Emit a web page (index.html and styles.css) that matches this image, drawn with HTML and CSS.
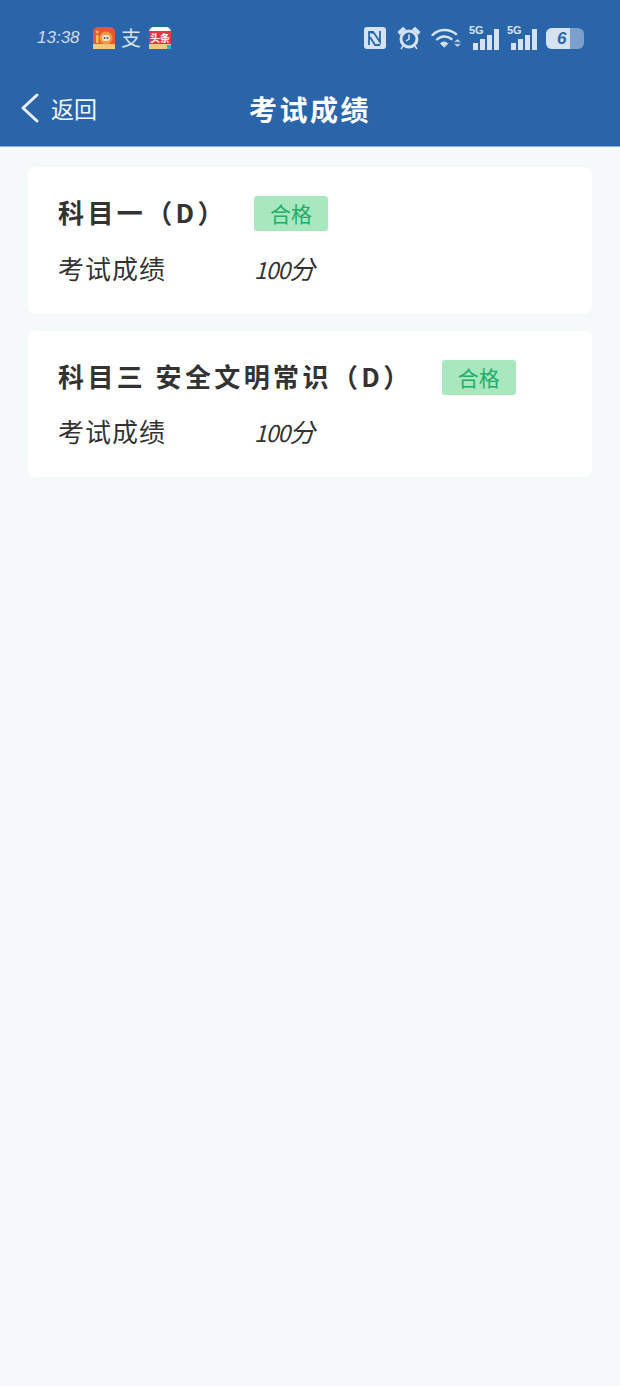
FILE: index.html
```html
<!DOCTYPE html>
<html lang="zh-CN">
  <head>
    <meta charset="UTF-8" />
    <meta name="viewport" content="width=device-width, initial-scale=1.0" />
    <title>考试成绩</title>
    <link rel="stylesheet" href="styles.css">
  </head>
  <body>
    <div class="header">
      <div class="status-bar">
        <div class="status-left">
          <span class="time">13:38</span>
          <svg class="app-icon" width="22" height="22" viewBox="0 0 22 22">
            <rect width="22" height="22" rx="5" fill="#e8553a" />
            <rect y="17" width="22" height="5" fill="#f5c77e" />
            <circle cx="13" cy="11" r="6.5" fill="#f29a3c" />
            <rect x="9" y="8" width="8" height="6" rx="3" fill="#f6e7d2" />
            <circle cx="11.5" cy="11" r="1" fill="#555" />
            <circle cx="14.5" cy="11" r="1" fill="#555" />
            <rect x="3" y="8" width="2.5" height="8" fill="#f9c04a" />
            <circle cx="4.2" cy="5" r="1.6" fill="#f9c04a" />
          </svg>
          <span class="app-glyph">支</span>
          <svg class="app-icon" width="22" height="22" viewBox="0 0 22 22">
            <rect width="22" height="22" rx="5" fill="#fff" />
            <rect y="4" width="22" height="13" fill="#e8353f" />
            <rect y="17" width="22" height="5" fill="#f5c77e" />
            <rect x="18" y="18" width="4" height="4" fill="#2bb5c9" />
            <text x="11" y="14.500" font-size="10" font-weight="bold" text-anchor="middle" fill="#fff">头条</text>
          </svg>
        </div>
        <div class="status-right">
          <svg class="nfc" width="22" height="22" viewBox="0 0 22 22">
            <rect width="22" height="22" rx="3" fill="#d5e2f2" />
            <path d="M5 18V5l5 1 6 9V4M5 5h5M16 18h-5l-5-8" fill="none" stroke="#2b65a9" stroke-width="1.800" />
          </svg>
          <svg class="alarm" width="24" height="24" viewBox="0 0 24 24">
            <circle cx="12" cy="13" r="8" fill="none" stroke="#d5e2f2" stroke-width="3" />
            <path d="M12 8.500V13l-3 2" fill="none" stroke="#d5e2f2" stroke-width="1.500" />
            <path d="M1.500 6 6 1.800 8 3.500 3 8zM22.500 6 18 1.800 16 3.500 21 8zM6 20l-2 3M18 20l2 3" fill="#d5e2f2" stroke="#d5e2f2" stroke-width="1.500" />
          </svg>
          <svg width="30" height="22" viewBox="0 0 30 22" fill="none" stroke="#d5e2f2" stroke-width="2.400" stroke-linecap="round">
            <path d="M1.500 8C8 1.500 18 1.500 25 7" />
            <path d="M6 12.500c4-4 10-4 14.500-.5" />
            <path d="M13 20l-3.500-3.500c2-2 5-2 7 0z" fill="#d5e2f2" stroke-width="1" />
            <path d="M24 14.500l2.500-2 2.500 2zM24 17.500l2.500 2 2.500-2z" fill="#d5e2f2" stroke-width="0.500" />
          </svg>
          <div class="signal">
            <span class="net">5G</span>
            <i class="b1"></i><i class="b2"></i><i class="b3"></i><i class="b4"></i>
          </div>
          <div class="signal">
            <span class="net">5G</span>
            <i class="b1"></i><i class="b2"></i><i class="b3"></i><i class="b4"></i>
          </div>
          <div class="battery"><div class="battery-level">6</div></div>
        </div>
      </div>
      <div class="nav-bar">
        <div class="back">
          <svg width="20" height="32" viewBox="0 0 20 32" fill="none" stroke="#e8eff8" stroke-width="3" stroke-linecap="round" stroke-linejoin="round">
            <path d="M17 3 3 16l14 13" />
          </svg>
          <span>返回</span>
        </div>
        <div class="nav-title">考试成绩</div>
      </div>
    </div>

    <div class="list">
      <div class="card">
        <div class="card-top">
          <span class="subject subject-short">科目一（D）</span>
          <span class="tag">合格</span>
        </div>
        <div class="score-row">
          <span class="score-label">考试成绩</span>
          <span class="score-value"><span class="score-num">100</span>分</span>
        </div>
      </div>
      <div class="card">
        <div class="card-top">
          <span class="subject">科目三 安全文明常识（D）</span>
          <span class="tag">合格</span>
        </div>
        <div class="score-row">
          <span class="score-label">考试成绩</span>
          <span class="score-value"><span class="score-num">100</span>分</span>
        </div>
      </div>
    </div>
  </body>
</html>
```

FILE: styles.css
```css
html,
body {
  height: 100%;
}
body {
  margin: 0;
  background: #f5f9fa;
  font-family: "Noto Sans CJK SC", "Liberation Sans", sans-serif;
  color: #333;
}
.header {
  height: 147px;
  background: #2b65a9;
  border-bottom: 1px solid #8fb0d6;
  box-sizing: border-box;
}
.status-bar {
  height: 72px;
  padding: 4px 36px 0 37px;
  box-sizing: border-box;
  display: flex;
  justify-content: space-between;
  align-items: center;
}
.status-left,
.status-right {
  display: flex;
  align-items: center;
}
.status-left {
  gap: 6px;
}
.status-right {
  gap: 8px;
}
.time {
  width: 50px;
  font-family: "Liberation Sans", sans-serif;
  font-size: 17px;
  font-style: italic;
  color: #cfdcee;
}
.app-glyph {
  width: 22px;
  font-size: 20px;
  line-height: 22px;
  color: #d5e2f2;
}
.nfc {
  margin-right: 3px;
}
.alarm {
  margin-right: 2px;
}
.signal {
  position: relative;
  width: 30px;
  height: 24px;
  display: flex;
  align-items: flex-end;
  justify-content: flex-end;
  gap: 2px;
}
.signal i {
  width: 5px;
  background: #d5e2f2;
}
.b1 {
  height: 7px;
}
.b2 {
  height: 11px;
}
.b3 {
  height: 15px;
}
.b4 {
  height: 21px;
}
.net {
  position: absolute;
  left: 0;
  top: -2px;
  font-family: "Liberation Sans", sans-serif;
  font-size: 11px;
  font-weight: bold;
  color: #d5e2f2;
}
.battery {
  width: 38px;
  height: 21px;
  margin-left: 1px;
  background: #7d9fcb;
  border-radius: 6px;
  overflow: hidden;
}
.battery-level {
  width: 13px;
  height: 21px;
  padding-left: 11px;
  background: #d5e2f2;
  font-family: "Liberation Sans", sans-serif;
  font-size: 17px;
  font-style: italic;
  font-weight: bold;
  line-height: 21px;
  color: #2b65a9;
}
.nav-bar {
  position: relative;
  height: 74px;
  display: flex;
  align-items: center;
  justify-content: center;
}
.back {
  position: absolute;
  left: 20px;
  top: 20px;
  display: flex;
  align-items: center;
  gap: 11px;
  font-size: 23px;
  line-height: 32px;
  color: #f2f6fb;
}
.nav-title {
  font-size: 28px;
  font-weight: bold;
  letter-spacing: 2.500px;
  color: #fff;
}
.list {
  padding: 20px 28px;
  display: flex;
  flex-direction: column;
  gap: 17px;
}
.card {
  height: 146.500px;
  padding: 29px 30px 0;
  box-sizing: border-box;
  background: #fff;
  border-radius: 8px;
}
.card-top {
  display: flex;
  align-items: center;
  height: 35px;
}
.subject {
  position: relative;
  top: -2px;
  font-size: 26px;
  font-weight: bold;
  letter-spacing: 3.400px;
  white-space: nowrap;
  margin-right: 29px;
}
.subject-short {
  width: 196px;
  margin-right: 0;
}
.tag {
  width: 74px;
  height: 35px;
  background: #a9e7bf;
  border-radius: 3px;
  font-size: 21px;
  line-height: 35px;
  text-align: center;
  color: #22ad6a;
}
.score-row {
  display: flex;
  align-items: center;
  margin-top: 18px;
  height: 36px;
  font-size: 26px;
}
.score-label {
  width: 196px;
  letter-spacing: 1px;
}
.score-value {
  font-style: italic;
}
.score-num {
  font-size: 23px;
  letter-spacing: -1px;
}
```
